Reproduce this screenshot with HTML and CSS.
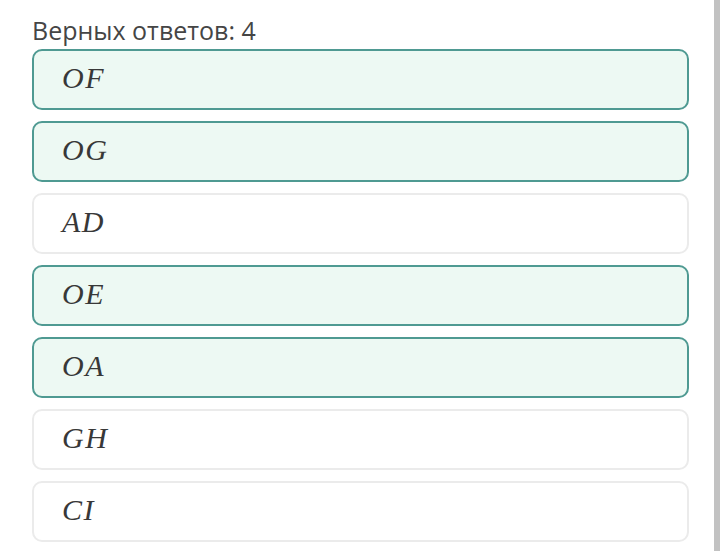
FILE: index.html
```html
<!DOCTYPE html>
<html lang="ru">
<head>
<meta charset="utf-8">
<link rel="stylesheet" href="styles.css">
</head>
<body>
<div class="page">
  <div class="content">
    <div class="title">Верных ответов: 4</div>
    <div class="list">
      <div class="opt sel"><span class="math">OF</span></div>
      <div class="opt sel"><span class="math">OG</span></div>
      <div class="opt"><span class="math">AD</span></div>
      <div class="opt sel"><span class="math">OE</span></div>
      <div class="opt sel"><span class="math">OA</span></div>
      <div class="opt"><span class="math">GH</span></div>
      <div class="opt"><span class="math">CI</span></div>
    </div>
  </div>
  <div class="scrollbar"></div>
</div>
</body>
</html>
```
FILE: styles.css
```css
html, body {
  margin: 0;
  padding: 0;
  background: #ffffff;
}
.page {
  display: flex;
  width: 720px;
  height: 551px;
  overflow: hidden;
}
.content {
  flex: 1;
  padding-left: 32px;
  padding-right: 25px;
}
.scrollbar {
  width: 6px;
  background: #c2c2c2;
}
.title {
  font-family: "Open Sans", sans-serif;
  font-size: 25px;
  color: #454545;
  line-height: 32px;
  padding-top: 14px;
  height: 35px;
}
.list {
  display: flex;
  flex-direction: column;
  gap: 11px;
}
.opt {
  box-sizing: border-box;
  height: 61px;
  border: 2px solid #ebebeb;
  border-radius: 10px;
  background: #ffffff;
  display: flex;
  align-items: center;
  padding-left: 28px;
  padding-bottom: 4px;
}
.opt.sel {
  border-color: #4f9a92;
  background: #edf9f3;
}
.math {
  font-family: "Liberation Serif", serif;
  font-style: italic;
  font-size: 30px;
  letter-spacing: 1.5px;
  color: #383838;
}
```
